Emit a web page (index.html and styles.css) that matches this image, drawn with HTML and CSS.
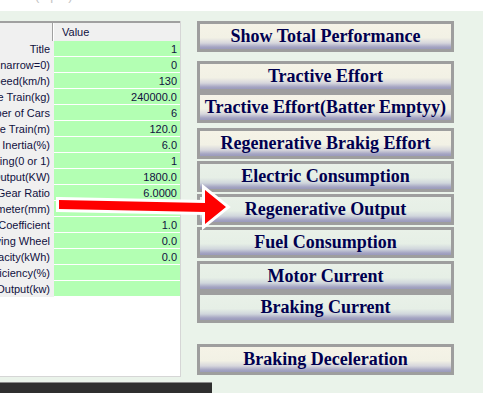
FILE: index.html
```html
<!DOCTYPE html>
<html lang="en">

<head>
    <meta charset="UTF-8">
    <title>Train Performance</title>
    <link rel="stylesheet" href="styles.css">
</head>

<body>
    <div class="topbar"><span class="caption">(Input)</span></div>

    <div class="main">
        <div class="grid">
            <div class="head">
                <div class="hlabel"></div>
                <div class="hvalue">Value</div>
            </div>
            <div class="row"><div class="label">Title</div><div class="value">1</div></div>
            <div class="row"><div class="label">Gauge(Wide=1,narrow=0)</div><div class="value">0</div></div>
            <div class="row"><div class="label">Max Speed(km/h)</div><div class="value">130</div></div>
            <div class="row"><div class="label">Weight of One Train(kg)</div><div class="value">240000.0</div></div>
            <div class="row"><div class="label">Number of Cars</div><div class="value">6</div></div>
            <div class="row"><div class="label">Length of One Train(m)</div><div class="value">120.0</div></div>
            <div class="row"><div class="label">Rotation Inertia(%)</div><div class="value">6.0</div></div>
            <div class="row"><div class="label">Regenerative Braking(0 or 1)</div><div class="value">1</div></div>
            <div class="row"><div class="label">Motor Output(KW)</div><div class="value">1800.0</div></div>
            <div class="row"><div class="label">Gear Ratio</div><div class="value">6.0000</div></div>
            <div class="row"><div class="label">Wheel Diameter(mm)</div><div class="value">860.0</div></div>
            <div class="row"><div class="label">Adhesion Coefficient</div><div class="value">1.0</div></div>
            <div class="row"><div class="label">Number of Driving Wheel</div><div class="value">0.0</div></div>
            <div class="row"><div class="label">Battery Capacity(kWh)</div><div class="value">0.0</div></div>
            <div class="row"><div class="label">Generator Efficiency(%)</div><div class="value"></div></div>
            <div class="row"><div class="label">Generator Output(kw)</div><div class="value"></div></div>
        </div>

        <div class="buttons">
            <div class="group">
                <div class="btn">Show Total Performance</div>
            </div>
            <div class="group g2">
                <div class="btn">Tractive Effort</div>
                <div class="btn">Tractive Effort(Batter Emptyy)</div>
            </div>
            <div class="group g3">
                <div class="btn">Regenerative Brakig Effort</div>
                <div class="btn green">Electric Consumption</div>
                <div class="btn green">Regenerative Output</div>
                <div class="btn green">Fuel Consumption</div>
            </div>
            <div class="group g4">
                <div class="btn green">Motor Current</div>
                <div class="btn green">Braking Current</div>
            </div>
            <div class="group g5">
                <div class="btn">Braking Deceleration</div>
            </div>
        </div>
    </div>

    <div class="status"></div>

    <svg class="arrow" width="483" height="393" viewBox="0 0 483 393">
        <polygon points="59,200 205,203 205,190 226,207 205,224 205,212 59,209"
            fill="#ff0000" stroke="#ffffff" stroke-width="6" stroke-linejoin="miter" paint-order="stroke" />
    </svg>
</body>

</html>
```

FILE: styles.css
```css
body {
    margin: 0;
    width: 483px;
    height: 393px;
    overflow: hidden;
    position: relative;
    background-color: #eaf3ea;
    font-family: 'Liberation Sans', Arial, sans-serif;
    font-size: 11px;
    color: #101040;
}

.topbar {
    height: 11px;
    background-color: #fff;
    overflow: hidden;
}

.caption {
    display: block;
    margin: -12px 0 0 35px;
    font-size: 13px;
    line-height: 16px;
    color: #c4c4c4;
}

.main {
    display: flex;
    margin-top: 10px;
}

.grid {
    width: 181px;
    height: 356px;
    box-sizing: border-box;
    background-color: #fff;
    border-right: 1px solid #d6d6d6;
    border-bottom: 1px solid #d6d6d6;
}

.head {
    display: flex;
    height: 20px;
    box-sizing: border-box;
    border-top: 2px solid #a0a0a0;
    background-color: #f0f0f0;
    line-height: 19px;
}

.hlabel {
    width: 52px;
    border-right: 1px solid #a0a0a0;
}

.hvalue {
    flex: 1;
    padding-left: 8px;
    border-left: 1px solid #fff;
}

.row {
    display: flex;
    height: 16px;
}

.label {
    width: 54px;
    box-sizing: border-box;
    display: flex;
    justify-content: flex-end;
    padding-right: 4px;
    overflow: hidden;
    white-space: nowrap;
    background-color: #f0f0f0;
    line-height: 17px;
}

.value {
    flex: 1;
    background-color: #b3ffb3;
    border-bottom: 1px solid #fff;
    text-align: right;
    padding-right: 3px;
    line-height: 16px;
}

.buttons {
    width: 257px;
    margin-left: 16px;
    display: flex;
    flex-direction: column;
}

.group {
    display: flex;
    flex-direction: column;
}

.g2 {
    margin-top: 9px;
}

.g3 {
    margin-top: 5px;
    gap: 2px;
}

.g4 {
    margin-top: 3px;
}

.g5 {
    margin-top: 21px;
}

.btn {
    height: 31px;
    box-sizing: border-box;
    border: 3px solid #9e9e9e;
    font-family: 'Liberation Serif', 'Times New Roman', serif;
    font-weight: bold;
    font-size: 18px;
    line-height: 24px;
    text-align: center;
    color: #000050;
    white-space: nowrap;
    background: linear-gradient(to bottom, #f5f3e7 0%, #f2f1e5 55%, #d6d6dc 76%, #a4a4c2 92%, #9a9abb 100%);
}

.btn.green {
    background: linear-gradient(to bottom, #e9f1e8 0%, #e6efe6 55%, #d0d6dc 76%, #a4a4c2 92%, #9a9abb 100%);
}

.status {
    margin-top: 5px;
    width: 212px;
    height: 11px;
    background-color: #2f2f2f;
    border-top: 1px solid #8a8a8a;
}

.arrow {
    position: absolute;
    top: 0;
    left: 0;
    pointer-events: none;
}
```
